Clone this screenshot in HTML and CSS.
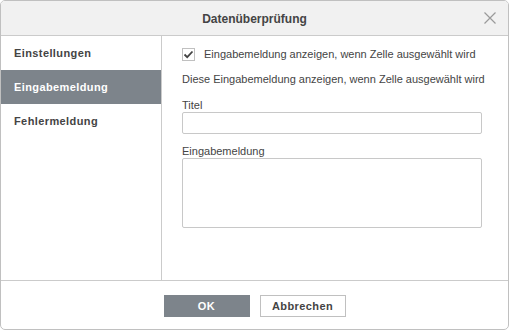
FILE: index.html
```html
<!DOCTYPE html>
<html lang="de">

<head>
	<meta charset="UTF-8">
	<meta name="viewport" content="width=device-width, initial-scale=1.0">
	<title>Datenüberprüfung</title>
	<link rel="stylesheet" href="styles.css">
</head>

<body>
	<div class="dialog">
		<div class="dialog-header">
			<span></span>
			<span class="dialog-title">Datenüberprüfung</span>
			<span class="dialog-close">
				<svg width="12" height="12" viewBox="0 0 12 12">
					<path d="M0.5 0.5 L11.5 11.5 M11.5 0.5 L0.5 11.5" stroke="#9a9a9a" stroke-width="1.2" fill="none" />
				</svg>
			</span>
		</div>
		<div class="dialog-body">
			<div class="side-menu">
				<div class="menu-item">Einstellungen</div>
				<div class="menu-item active">Eingabemeldung</div>
				<div class="menu-item">Fehlermeldung</div>
			</div>
			<div class="panel">
				<label class="check-row">
					<span class="checkbox">
						<svg width="11" height="11" viewBox="0 0 11 11">
							<path d="M1.5 5.5 L4.2 8.2 L9.5 2.5" stroke="#444" stroke-width="1.8" fill="none" />
						</svg>
					</span>
					<span>Eingabemeldung anzeigen, wenn Zelle ausgewählt wird</span>
				</label>
				<div class="hint">Diese Eingabemeldung anzeigen, wenn Zelle ausgewählt wird</div>
				<div class="field-label">Titel</div>
				<div class="text-input"></div>
				<div class="field-label second">Eingabemeldung</div>
				<div class="text-area"></div>
			</div>
		</div>
		<div class="dialog-footer">
			<button class="btn btn-primary">OK</button>
			<button class="btn">Abbrechen</button>
		</div>
	</div>
</body>

</html>
```

FILE: styles.css
```css
body {
	margin: 0;
	background-color: #fff;
	font-family: "Liberation Sans", Arial, sans-serif;
	color: #444;
}

.dialog {
	width: 509px;
	height: 330px;
	box-sizing: border-box;
	border: 1px solid #c0c0c0;
	border-radius: 5px;
	display: flex;
	flex-direction: column;
	overflow: hidden;
}

.dialog-header {
	height: 34px;
	flex: none;
	background-color: #f1f1f1;
	border-bottom: 1px solid #cbcbcb;
	display: grid;
	grid-template-columns: 1fr auto 1fr;
	align-items: center;
}

.dialog-title {
	font-size: 12px;
	font-weight: bold;
	padding-top: 1px;
}

.dialog-close {
	justify-self: end;
	margin-right: 12px;
	display: flex;
}

.dialog-body {
	height: 244px;
	flex: none;
	display: flex;
	border-bottom: 1px solid #cbcbcb;
}

.side-menu {
	width: 160px;
	border-right: 1px solid #cbcbcb;
}

.menu-item {
	height: 34px;
	line-height: 34px;
	padding-left: 13px;
	font-size: 11px;
	font-weight: bold;
	letter-spacing: 0.4px;
}

.menu-item.active {
	background-color: #7d848b;
	color: #fff;
}

.panel {
	flex: 1;
	padding: 11px 0 0 20px;
	font-size: 11px;
}

.check-row {
	display: flex;
	align-items: center;
	gap: 9px;
	height: 14px;
}

.checkbox {
	width: 11px;
	height: 11px;
	border: 1px solid #c0c0c0;
	display: flex;
	align-items: center;
	justify-content: center;
}

.hint {
	margin-top: 11px;
	line-height: 14px;
}

.field-label {
	margin-top: 12px;
	line-height: 14px;
}

.field-label.second {
	margin-top: 10px;
}

.text-input,
.text-area {
	width: 300px;
	box-sizing: border-box;
	border: 1px solid #c8c8c8;
	border-radius: 2px;
}

.text-input {
	height: 22px;
}

.text-area {
	height: 70px;
}

.dialog-footer {
	flex: 1;
	display: flex;
	justify-content: center;
	align-items: flex-start;
	gap: 10px;
	padding-top: 14px;
}

.btn {
	width: 86px;
	height: 22px;
	box-sizing: border-box;
	border: 1px solid #c0c0c0;
	background-color: #fff;
	color: #444;
	font-family: "Liberation Sans", Arial, sans-serif;
	font-size: 11px;
	font-weight: bold;
	letter-spacing: 0.4px;
	padding: 0;
}

.btn-primary {
	background-color: #7d848b;
	border-color: #7d848b;
	color: #fff;
}
```
